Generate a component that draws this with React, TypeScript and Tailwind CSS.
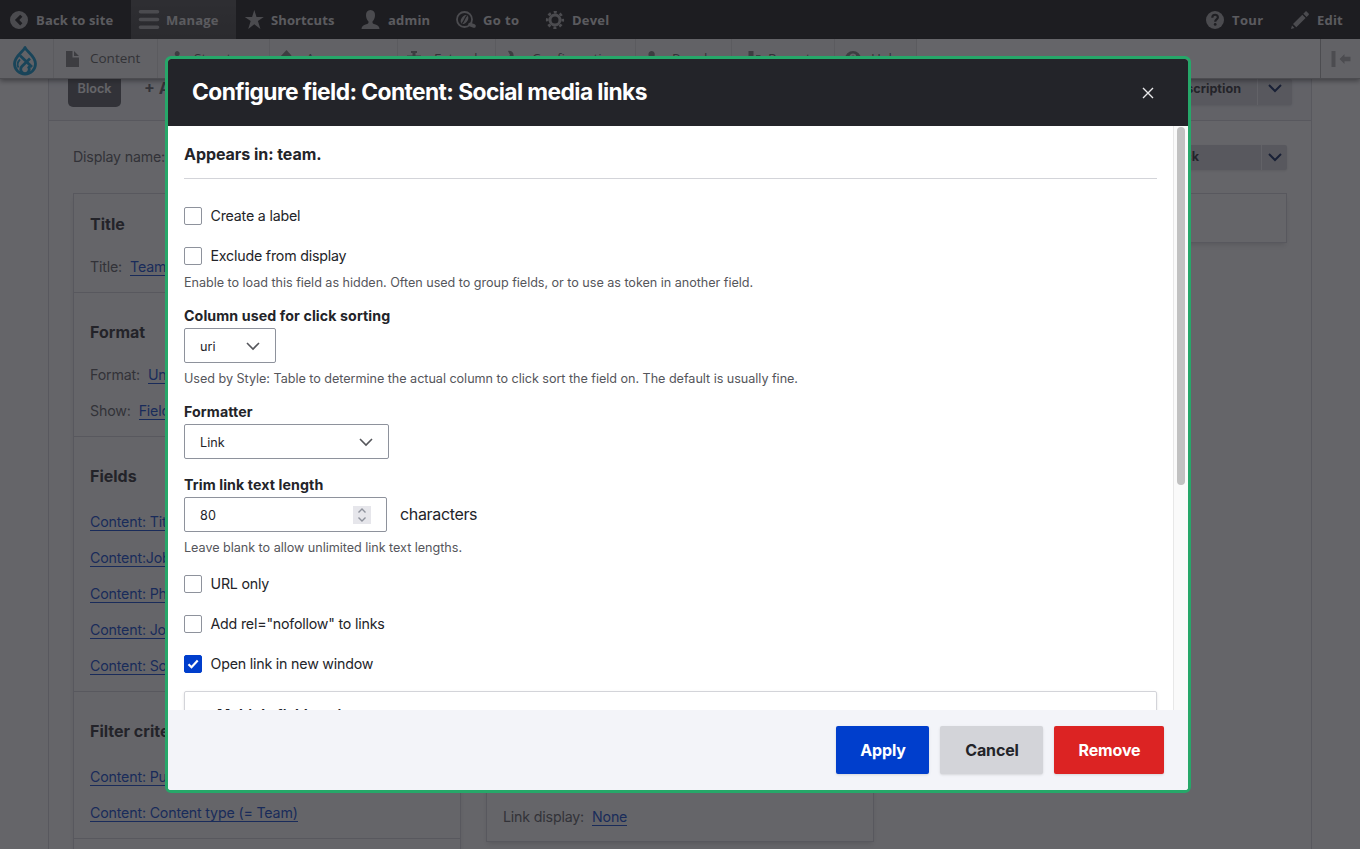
import React from "react";

const Chevron = ({ c = "", w = 2 }: { c?: string; w?: number }) => (
  <svg viewBox="0 0 14 9" className={"h-[9px] w-[14px] " + c} fill="none" stroke="currentColor" strokeWidth={w}>
    <path d="M1 1l6 6 6-6" />
  </svg>
);

const toolIcons: Record<string, React.ReactNode> = {
  back: <path fillRule="evenodd" d="M9 1a9 9 0 100 18A9 9 0 009 1zm1.200 3.700L12.400 6.800 9.300 10l3.100 3.200-2.200 2.200L4.900 10z" />,
  manage: <path d="M1.500 0h17a1.600 1.600 0 010 3.600h-17a1.600 1.600 0 010-3.600zM1.500 7.700h17a1.600 1.600 0 010 3.600h-17a1.600 1.600 0 010-3.600zM1.500 15.400h17a1.600 1.600 0 010 3.600h-17a1.600 1.600 0 010-3.600z" />,
  star: <path d="M9.300 0l2.200 6.900h7.300l-5.900 4.200L15.400 19l-6.100-4.700L3.200 19l2.500-7.900L-.2 6.900h7.300z" />,
  user: <path d="M9.500 0C6.500 0 5 2.200 5 5.200c0 2.500 1 5 2.500 6.200.3 1.700-.4 2.300-3 3.200C1.800 15.600.8 16.500.5 19h18c-.3-2.500-1.300-3.400-4-4.400-2.600-.9-3.300-1.500-3-3.200C13 10.200 14 7.700 14 5.200 14 2.200 12.500 0 9.500 0z" />,
  help: <><circle cx="9" cy="10" r="9" /><path d="M6.300 7.800c0-4 5.600-3.900 5.600-.5 0 2.100-2.700 2.200-2.700 4.400" fill="none" stroke="#171717" strokeWidth="2.200" /><circle cx="9.200" cy="14.400" r="1.400" fill="#171717" /></>,
  edit: <path d="M0 19l1-3.500 2.500 2.500zM2 14L11.300 4.700l3.300 3.300-9.300 9.300zM12.300 3.700l2-2c.5-.5 1-.5 1.500 0l1.800 1.800c.5.500.5 1 0 1.500l-2 2z" />,
  gear: <g fill="none" stroke="currentColor"><circle cx="9" cy="10" r="5" strokeWidth="3" /><circle cx="9" cy="10" r="7.800" strokeWidth="2.600" strokeDasharray="3 3.126" strokeDashoffset="1.500" /></g>,
  goto: <g fill="none" stroke="currentColor"><circle cx="8.500" cy="9.500" r="7.500" strokeWidth="1.800" /><ellipse cx="8.500" cy="9.500" rx="3.200" ry="5" transform="rotate(35 8.500 9.500)" fill="currentColor" stroke="none" /><path d="M11 5.500c-2.500 2-2 5-5 8" stroke="#171717" strokeWidth="1.200" /><path d="M14 14.500l4 1.500" strokeWidth="3.600" strokeLinecap="round" /></g>,
};

function Tab({ icon, label, cls }: { icon: string; label: string; cls: string }) {
  return (
    <div className={"flex h-[39px] shrink-0 items-center text-[13px] font-bold leading-none text-[#dddddd] " + cls}>
      <svg viewBox="0 0 20 20" className="h-5 w-5 shrink-0 overflow-visible text-[#a8a8a8]" fill="currentColor">{toolIcons[icon]}</svg>
      <span className="whitespace-nowrap pt-0.5">{label}</span>
    </div>
  );
}

const trayIcons: Record<string, React.ReactNode> = {
  content: <path d="M0 0h6.500v6.500H13V16H0zM8 0l5 5H8z" />,
  structure: <path d="M7 0a2.700 2.700 0 012 4.500L8 5v4h5v5H1V9h5V5A2.700 2.700 0 017 0z" />,
  appearance: <path d="M3.500 0l5 5.500-6 7-6-5z" transform="translate(1 -1)" />,
  extend: <path d="M1 0h6v2H5.500v2.500h5.500v5h-14v-5H2.500V2H1z" />,
  config: <path d="M0 0c4-1 7 3 5 7l5 6-3 2-5-5c-4 1-6-1-6-4l3.500 1.500L2 4z" />,
  people: <path d="M3.500 0c4 0 4 5 2 7v7H-.5V9l2-3C-.5 4 .5 0 3.500 0zM11 5c3 0 3 4 2 5l2 4H8v-5c0-2 1-4 3-4z" />,
  reports: <path d="M4.500 0h5v14h-5zM12 4h4.500v10H12z" />,
  help: <path fillRule="evenodd" d="M6 0a8 8 0 100 16A8 8 0 006 0zm0 2.500c4 0 4 4 1.200 5.500V10H5V7c3-1 2.500-2.500 1-2.500S4 6 2.500 6c0-2 1.500-3.500 3.500-3.500z" />,
};

function TrayItem({ icon, label, cls }: { icon: string; label: string; cls: string }) {
  return (
    <div className={"flex h-[39px] shrink-0 items-center overflow-hidden border-r border-[#dddddd] bg-[#f5f5f5] pl-3 text-[13.500px] text-[#565656] " + cls}>
      <svg viewBox="0 0 16 16" className="mr-2 h-4 w-4 shrink-0 overflow-visible text-[#787878]" fill="currentColor">{trayIcons[icon]}</svg>
      <span className="whitespace-nowrap">{label}</span>
    </div>
  );
}

function Link({ children }: { children: React.ReactNode }) {
  return <span className="whitespace-nowrap border-b border-[#003ecc] leading-[17px] text-[#003ecc]">{children}</span>;
}

function SideRow({ label, link }: { label?: string; link: string }) {
  return (
    <div className="flex h-9 items-center gap-2 text-[14.220px] tracking-[-0.180px] text-[#55565b]">
      {label && <span>{label}</span>}
      <Link>{link}</Link>
    </div>
  );
}

function Section({ title, cls, children }: { title: string; cls: string; children: React.ReactNode }) {
  return (
    <section className={"border-b border-[#d3d4d9] px-4 " + cls}>
      <h3 className="flex h-[61px] items-center pb-0.5 text-base font-bold">{title}</h3>
      {children}
    </section>
  );
}

function Check({ label, checked, cls }: { label: string; checked?: boolean; cls: string }) {
  return (
    <div className={"flex h-[18px] items-center gap-[8.500px] text-[14.220px] tracking-[-0.200px] " + cls}>
      <span className={"flex h-[18px] w-[18px] items-center justify-center rounded-[2px] border " + (checked ? "border-[#003ecc] bg-[#003ecc]" : "border-[#8e929c] bg-white")}>
        {checked && (
          <svg viewBox="0 0 16 16" className="h-4 w-4 shrink-0" fill="none" stroke="white" strokeWidth="2.200"><path d="M3.500 8.200l3 3L12.700 4.500" /></svg>
        )}
      </span>
      <span>{label}</span>
    </div>
  );
}

const Label = ({ children, cls }: { children: React.ReactNode; cls: string }) => (
  <div className={"text-[14.220px] font-bold leading-6 tracking-[0.090px] " + cls}>{children}</div>
);
const Desc = ({ children, cls }: { children: React.ReactNode; cls: string }) => (
  <div className={"text-[12.640px] leading-4 tracking-[-0.040px] text-[#55565b] " + cls}>{children}</div>
);

function SelectBox({ value, cls }: { value: string; cls: string }) {
  return (
    <div className={"flex h-[35px] items-center justify-between rounded-[2px] border border-[#8e929c] px-[15px] pt-0.5 text-[12.640px] " + cls}>
      <span className="pt-0.5">{value}</span>
      <Chevron c="text-[#55565b]" w={1.6} />
    </div>
  );
}

function Drop({ label, cls }: { label: string; cls: string }) {
  return (
    <div className={"flex rounded-[2px] bg-[#d3d4d9] text-[12.640px] font-bold shadow " + cls}>
      <span className="flex flex-1 items-center justify-end overflow-hidden whitespace-nowrap">{label}</span>
      <span className="flex items-center justify-center self-stretch border-l border-[#f3f4f9] px-[6px] text-[#001a55]"><Chevron /></span>
    </div>
  );
}

export default function App() {
  return (
    <div className="relative h-[849px] w-[1360px] overflow-hidden bg-white font-['Inter',sans-serif] text-[#232429]">
      <div className="flex h-full flex-col">
        <header className="relative z-10 shrink-0 font-['Open_Sans','Noto_Sans',sans-serif]">
          <nav className="flex bg-[#0f0f0f]">
            <Tab icon="back" label="Back to site" cls="w-[131px] gap-[6px] pl-[10px] tracking-[0.150px]" />
            <Tab icon="manage" label="Manage" cls="w-[105px] gap-[7px] bg-linear-to-b from-[#484848] to-[#3a3a3a] pl-[8px] tracking-[0.200px]" />
            <Tab icon="star" label="Shortcuts" cls="w-[125px] gap-[6px] pl-[9px] tracking-[0.100px]" />
            <Tab icon="user" label="admin" cls="w-[95px] gap-[7px] tracking-[0.200px]" />
            <Tab icon="goto" label="Go to" cls="w-[90px] gap-[7px] tracking-[0.350px]" />
            <Tab icon="gear" label="Devel" cls="gap-[6px] tracking-[0.200px]" />
            <div className="flex-1" />
            <Tab icon="help" label="Tour" cls="w-[85px] gap-[6px] tracking-[0.350px]" />
            <Tab icon="edit" label="Edit" cls="w-[69px] gap-[6px] tracking-[0.200px]" />
          </nav>
          <nav className="flex h-10 border-b border-[#aaaaaa] bg-white shadow-[0_2px_5px_rgba(0,0,0,0.5)]">
            <div className="flex w-[54px] items-center justify-center border-r border-[#dddddd] bg-[#f5f5f5] pr-[3px] pt-1">
              <svg viewBox="0 0 24 31" className="h-[31px] w-6" fill="none" stroke="#0091c9" strokeWidth="2.800" strokeLinejoin="round">
                <path d="M12 2.500C10.500 6.500 1.500 11 1.500 18.700a10.500 10.500 0 0021 0C22.500 11 13.500 6.500 12 2.500z" />
                <path d="M7 10.500l12 11.500M17 13.500l-8 7.700a4.300 4.300 0 106 0" />
                <path d="M7 14.500c-3 3-3 5.500-1.500 8" strokeWidth="1.800" />
              </svg>
            </div>
            <TrayItem icon="content" label="Content" cls="w-[104px]" />
            <TrayItem icon="structure" label="Structure" cls="w-[112px]" />
            <TrayItem icon="appearance" label="Appearance" cls="w-[128px]" />
            <TrayItem icon="extend" label="Extend" cls="w-[98px]" />
            <TrayItem icon="config" label="Configuration" cls="w-[140px]" />
            <TrayItem icon="people" label="People" cls="w-[96px]" />
            <TrayItem icon="reports" label="Reports" cls="w-[103px]" />
            <TrayItem icon="help" label="Help" cls="w-[82px]" />
            <div className="flex-1" />
            <div className="flex w-10 items-center justify-center border-l border-[#aaaaaa] bg-[#f5f5f5] text-[#aaaaaa]">
              <svg viewBox="0 0 20 16" className="h-4 w-5" fill="currentColor"><path d="M.5 0h4v16h-4zM8.500 8l5-5v2.700h6v4.600h-6V13z" /></svg>
            </div>
          </nav>
        </header>

        <main className="ml-12 flex min-h-0 w-[1264px] flex-1 flex-col border-x border-[#d3d4d9]">
          <div className="flex h-[42px] shrink-0 items-start border-b border-[#d3d4d9] bg-[#f3f4f9] pl-[19px] pr-[19px]">
            <div className="flex h-7 w-[53px] items-start justify-center rounded-b-[5px] bg-[#55565b] text-[12.640px] font-semibold leading-[19px] text-white">Block</div>
            <div className="ml-[23px] whitespace-nowrap text-base font-bold leading-[19px] text-[#55565b]">+ Add</div>
            <div className="flex-1" />
            <Drop label="Edit view name/description" cls="h-[26px] w-[230px] [&>span:first-child]:mb-[6px] [&>span:first-child]:pr-4 [&>span:last-child]:px-[10px] [&>span:last-child]:pb-[8px]" />
          </div>
          <div className="flex h-[72px] shrink-0 items-center px-6 text-[14.220px] text-[#55565b]">
            <span className="tracking-[-0.180px]">Display name:</span>
            <div className="flex-1" />
            <Drop label="View Block" cls="h-[25px] w-[180px] text-[#232429] [&>span:first-child]:pr-[62px] [&>span:last-child]:pl-[6px] [&>span:last-child]:pr-[5px]" />
          </div>
          <div className="flex min-h-0 flex-1 items-start gap-[25px] px-6">
            <div className="w-[388px] shrink-0 border border-b-0 border-[#d3d4d9] shadow-md">
              <Section title="Title" cls="h-[99px]"><div className="-mt-[6px]"><SideRow label="Title:" link="Team" /></div></Section>
              <Section title="Format" cls="h-[144px] pt-[9px]"><div className="-mt-[6px]"><SideRow label="Format:" link="Unfor" /><SideRow label="Show:" link="Fields" /></div></Section>
              <Section title="Fields" cls="h-[255px] pt-[9px]">
                <div className="-mt-[3px]">
                  <SideRow link="Content: Title" /><SideRow link="Content:Job Title" /><SideRow link="Content: Photo" />
                  <SideRow link="Content: Job role" /><SideRow link="Content: Social" />
                </div>
              </Section>
              <Section title="Filter criteria" cls="h-[147px] pt-[9px]"><div className="-mt-[3px]"><SideRow link="Content: Published (= Yes)" /><SideRow link="Content: Content type (= Team)" /></div></Section>
              <div className="h-10" />
            </div>
            <div className="flex h-[649px] w-[388px] shrink-0 flex-col justify-end border border-[#d3d4d9] px-4 pb-[6px] shadow-md">
              <SideRow label="Link display:" link="None" />
            </div>
            <div className="h-[50px] flex-1 border border-[#d3d4d9] shadow-md" />
          </div>
        </main>
      </div>

      <div className="absolute inset-0 z-20 bg-[#232429]/70" />

      <div role="dialog" className="absolute left-[165px] top-[56px] z-30 flex h-[737px] w-[1026px] flex-col overflow-hidden rounded-[6px] border-[3px] border-[#26a769] bg-white">
        <div className="flex h-[67px] shrink-0 items-center justify-between bg-[#232429] pl-6 pr-[34px] text-white">
          <h2 className="pb-0.5 text-[22.780px] font-bold leading-7 tracking-[-0.580px]">Configure field: Content: Social media links</h2>
          <svg viewBox="0 0 12 12" className="h-3 w-3" stroke="#e8e8ea" strokeWidth="1.400"><path d="M1 1l10 10M11 1L1 11" /></svg>
        </div>
        <div className="flex min-h-0 flex-1">
          <div className="flex-1 overflow-hidden pl-4 pr-4">
            <div className="border-b border-[#d3d4d9] pb-3 pt-4 text-base font-bold leading-6 tracking-[-0.050px]">Appears in: team.</div>
            <Check label="Create a label" cls="mt-7" />
            <Check label="Exclude from display" cls="mt-[22px]" />
            <Desc cls="mt-[10px]">Enable to load this field as hidden. Often used to group fields, or to use as token in another field.</Desc>
            <Label cls="mt-[13px]">Column used for click sorting</Label>
            <SelectBox value="uri" cls="w-[92px]" />
            <Desc cls="mt-2">Used by Style: Table to determine the actual column to click sort the field on. The default is usually fine.</Desc>
            <Label cls="mt-[13px]">Formatter</Label>
            <SelectBox value="Link" cls="w-[205px]" />
            <Label cls="mt-[14px]">Trim link text length</Label>
            <div className="flex items-center gap-[13px]">
              <div className="flex h-[35px] w-[203px] items-center justify-between rounded-[2px] border border-[#8e929c] px-[15px] text-[12.640px]">
                <span className="pt-[3px] tracking-[0.300px]">80</span>
                <span className="flex h-[18px] w-[18px] flex-col items-center justify-center gap-1 bg-[#e6e6eb] text-[#8e929c]">
                  <svg viewBox="0 0 8 5" className="h-[5px] w-2" fill="none" stroke="currentColor" strokeWidth="1.400"><path d="M.5 4.500L4 1l3.500 3.500" /></svg>
                  <svg viewBox="0 0 8 5" className="h-[5px] w-2" fill="none" stroke="currentColor" strokeWidth="1.400"><path d="M.5.5L4 4 7.500.5" /></svg>
                </span>
              </div>
              <span className="pb-0.5 text-base tracking-[-0.340px]">characters</span>
            </div>
            <Desc cls="mt-2">Leave blank to allow unlimited link text lengths.</Desc>
            <Check label="URL only" cls="mt-[19px]" />
            <Check label={'Add rel="nofollow" to links'} cls="mt-[22px]" />
            <Check label="Open link in new window" checked cls="mt-[22px]" />
            <div className="mt-[18px] h-20 rounded-[2px] border border-[#d3d4d9] pl-8 pt-[13px] text-[14.220px] font-bold leading-5 shadow">Multiple field settings</div>
          </div>
          <div className="w-[15px] border-l border-[#e8e8e8] bg-[#fafafa] pl-[3px] pt-px"><div className="h-[358px] w-2 rounded-full bg-[#c1c1c1]" /></div>
        </div>
        <div className="flex h-20 shrink-0 items-center justify-end gap-[11px] bg-[#f3f4f9] pr-6 text-base font-bold tracking-[-0.150px]">
          <button className="h-12 w-[93px] rounded-[2px] bg-[#003ecc] pl-px text-white shadow">Apply</button>
          <button className="h-12 w-[103px] rounded-[2px] bg-[#d3d4d9] pl-px shadow">Cancel</button>
          <button className="h-12 w-[110px] rounded-[2px] bg-[#dc2323] pl-px text-white shadow">Remove</button>
        </div>
      </div>
    </div>
  );
}
